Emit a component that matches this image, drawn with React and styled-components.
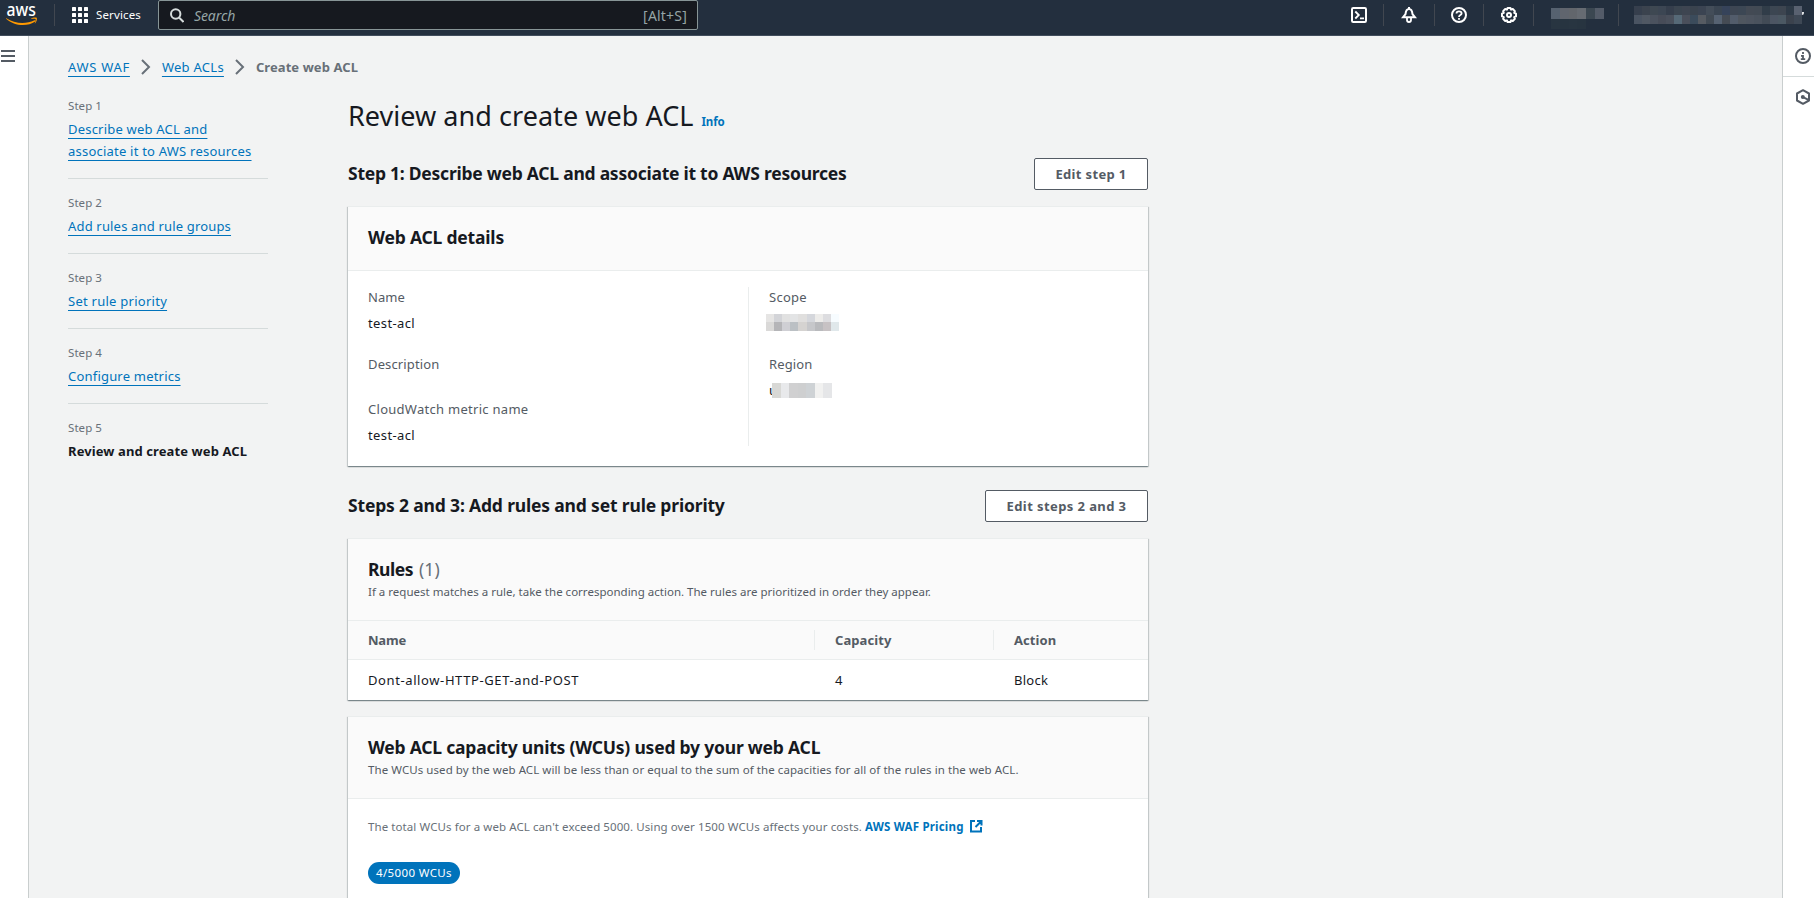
import React from "react";
import styled, { createGlobalStyle, css } from "styled-components";

const GlobalStyle = createGlobalStyle`
  * { box-sizing: border-box; }
  html, body { margin: 0; padding: 0; height: 100%; overflow: hidden; }
  body {
    background: #f2f3f3;
    color: #16191f;
    font-family: "Noto Sans", "Open Sans", sans-serif;
    font-size: 13px;
    line-height: 22px;
  }
  h1, h2, h3, p, ol, ul, dl, dd { margin: 0; padding: 0; }
  ol, ul { list-style: none; }
`;

const tracking = css`
  letter-spacing: ${(p) => p.$ls || 0}px;
  white-space: nowrap;
`;

const Page = styled.div`
  display: flex;
  flex-direction: column;
  height: 898px;
  overflow: hidden;
`;

/* ---------- top navigation ---------- */

const TopBar = styled.header`
  display: flex;
  flex: none;
  height: 36px;
  background: #232f3e;
  border-bottom: 1px solid #414d5c;
  color: #fff;
`;

const LogoLink = styled.a`
  display: block;
  width: 54px;
  height: 30px;
`;

const NavDivider = styled.span`
  flex: none;
  width: 1px;
  height: 22px;
  margin-top: 4px;
  background: #414750;
`;

const ServicesButton = styled.div`
  display: flex;
  align-items: center;
  gap: 8px;
  width: 103px;
  height: 30px;
  padding-left: 17px;
`;

const NavText = styled.span`
  font-size: 11.5px;
  ${tracking}
`;

const SearchBox = styled.div`
  display: flex;
  align-items: center;
  width: 540px;
  height: 30px;
  padding: 0 10px 0 11px;
  background: #16191f;
  border: 1px solid #879596;
  border-radius: 2px;
  color: #95a5a6;
  font-size: 14px;
`;

const Placeholder = styled.span`
  flex: 1;
  margin-left: 10px;
  padding-top: 2px;
  font-style: italic;
  ${tracking}
`;

const Shortcut = styled.span`
  padding-top: 2px;
  ${tracking}
`;

const NavTools = styled.div`
  display: flex;
  margin-left: auto;
  height: 30px;
`;

const ToolSlot = styled.span`
  display: flex;
  align-items: center;
  width: ${(p) => p.$w}px;
  height: 30px;
  padding-left: ${(p) => p.$pl}px;
`;

const AccountSlot = styled.span`
  display: flex;
  align-items: flex-start;
  width: ${(p) => p.$w}px;
  padding: ${(p) => p.$pt}px 0 0 ${(p) => p.$pl}px;
`;

const CaretRemnant = styled.span`
  width: 2px;
  height: 3px;
  margin-top: 6px;
  background: #dfe2e5;
  border-radius: 0 0 2px 0;
`;

/* ---------- redaction blocks ---------- */

const MosaicGrid = styled.span`
  position: relative;
  display: flex;
  flex-direction: column;
`;
const MosaicRow = styled.span`
  display: flex;
  height: ${(p) => p.$h}px;
`;
const MosaicCell = styled.span`
  width: ${(p) => p.$w}px;
  background: ${(p) => p.$c};
`;

function Mosaic({ rows }) {
  return (
    <MosaicGrid>
      {rows.map((row, i) => (
        <MosaicRow key={i} $h={row.h}>
          {row.cells.split(" ").map((c, j) => (
            <MosaicCell key={j} $w={row.w} $c={"#" + c} />
          ))}
        </MosaicRow>
      ))}
    </MosaicGrid>
  );
}

const regionMosaic = [
  { h: 11, w: 8.83, cells: "566270 60656e 62666c 666b72 3b4751 535b68" },
  { h: 10, w: 8.83, cells: "283541 273440 283541 273440" },
];
const accountMosaic = [
  {
    h: 9,
    w: 8,
    cells:
      "363f4d 3b434e 3e4852 3c4653 353e4c 3b4550 3e4551 3a434e 3b4452 434d59 3a4552 36435a 3d4653 3c4754 434a54 424a54 313d49 3c4652 3d4550 2e3a47 596170",
  },
  {
    h: 9,
    w: 8,
    cells:
      "4a5462 505863 4b525e 474c58 4a505c 566977 4a4f5b 3b4b5b 565b62 414a54 566272 454b54 525c6b 4f565f 4d545f 4a525d 424b56 4c5563 4b5863 3b424d 3e4855",
  },
];
const scopeMosaic = [
  { h: 8, w: 8.11, cells: "e6e5e4 d3d4d8 e1e1e1 e3e4e5 e0dfde d5d7dc edecea dddde0 f7fcff" },
  { h: 9, w: 8.11, cells: "dad9d8 b5b5b8 cfcfd4 bbc0c4 d5d3d1 c6c7ca b9babd c7c2c4 e0e8eb" },
];
const regionValueMosaic = [
  { h: 15, w: 8.57, cells: "d8d8d5 e8e9eb d0d0d1 cecfd0 ced2d5 f1f1f0 e5e6e8" },
];

/* ---------- shell ---------- */

const Shell = styled.div`
  display: flex;
  flex: 1;
  min-height: 0;
`;

const LeftRail = styled.nav`
  flex: none;
  width: 29px;
  padding: 14px 0 0 1px;
  background: #fff;
  border-right: 1px solid #c9cece;
`;

const MenuLines = styled.span`
  display: flex;
  flex-direction: column;
  gap: 3px;
  width: 14px;
`;
const MenuLine = styled.span`
  height: 2px;
  background: #545b64;
`;

const RightRail = styled.aside`
  flex: none;
  width: 32px;
  background: #fff;
  border-left: 1px solid #c9cece;
`;
const RailItem = styled.div`
  display: flex;
  align-items: center;
  height: ${(p) => (p.$line ? 41 : 40)}px;
  padding-left: 12px;
  border-bottom: ${(p) => (p.$line ? "1px solid #d5dbdb" : "none")};
`;

const Content = styled.main`
  flex: 1;
  min-width: 0;
  padding: 20px 0 0 39px;
  overflow: hidden;
`;

/* ---------- breadcrumbs and steps ---------- */

const Breadcrumbs = styled.nav`
  display: flex;
  align-items: center;
  height: 22px;
`;
const Link = styled.a`
  color: #0073bb;
  text-decoration: underline 1px;
  text-decoration-skip-ink: none;
  text-underline-offset: 4px;
  ${tracking}
`;
const CrumbCurrent = styled.span`
  color: #687078;
  font-weight: 700;
  ${tracking}
`;
const ChevronBox = styled.span`
  display: flex;
  width: ${(p) => p.$w}px;
  padding-left: ${(p) => p.$pl}px;
`;

const Columns = styled.div`
  display: flex;
  padding-top: 4px;
`;
const StepList = styled.ol`
  flex: none;
  width: 200px;
  margin-right: 80px;
`;
const StepItem = styled.li`
  padding: 15px 0 16px;
  border-bottom: 1px solid #d5dbdb;
  &:last-child {
    border-bottom: none;
  }
`;
const StepLabel = styled.div`
  height: 16px;
  margin-bottom: 5px;
  color: #687078;
  font-size: 11.5px;
  line-height: 18px;
  ${tracking}
`;
const StepLine = styled.div`
  height: 22px;
`;
const StepCurrent = styled.span`
  font-weight: 700;
  ${tracking}
`;

/* ---------- main column ---------- */

const MainColumn = styled.div`
  width: 800px;
  padding-top: 15px;
`;
const Title = styled.h1`
  height: 36px;
  font-size: 27px;
  font-weight: 400;
  line-height: 38px;
  ${tracking}
`;
const InfoLink = styled.a`
  margin-left: 8px;
  color: #0073bb;
  font-size: 11.5px;
  font-weight: 700;
  ${tracking}
`;
const SectionHeader = styled.div`
  display: flex;
  align-items: flex-start;
  justify-content: space-between;
  margin-top: ${(p) => p.$mt}px;
  height: 32px;
`;
const SectionTitle = styled.h2`
  padding-top: 4px;
  font-size: 17.5px;
  line-height: 22px;
  ${tracking}
`;
const Button = styled.button`
  width: ${(p) => p.$w}px;
  height: 32px;
  padding: 0;
  background: #fff;
  border: 1px solid #545b64;
  border-radius: 2px;
  color: #545b64;
  font: 700 13px/22px "Noto Sans", "Open Sans", sans-serif;
  ${tracking}
`;
const Card = styled.section`
  margin-top: 16px;
  background: #fff;
  border-top: 1px solid #eaeded;
  box-shadow: 0 1px 1px 0 rgba(0, 28, 36, 0.3), 1px 1px 1px 0 rgba(0, 28, 36, 0.15),
    -1px 1px 1px 0 rgba(0, 28, 36, 0.15);
`;
const CardHeader = styled.div`
  padding: 19px 20px ${(p) => p.$pb}px;
  background: #fafafa;
  border-bottom: 1px solid #eaeded;
`;
const CardTitle = styled.h3`
  font-size: 17.5px;
  line-height: 22px;
  ${tracking}
`;
const Counter = styled.span`
  margin-left: 6px;
  color: #687078;
  font-weight: 400;
  letter-spacing: 0.1px;
`;
const CardDescription = styled.p`
  height: 18px;
  margin-top: 2px;
  color: #545b64;
  font-size: 11.5px;
  line-height: 20px;
  ${tracking}
`;
const DetailColumns = styled.div`
  display: grid;
  grid-template-columns: 380px 380px;
  padding: 16px 20px 20px;
`;
const DetailColumn = styled.dl`
  display: flex;
  flex-direction: column;
  gap: 20px;
  padding-left: ${(p) => (p.$divided ? 20 : 0)}px;
  border-left: ${(p) => (p.$divided ? "1px solid #eaeded" : "none")};
`;
const DetailLabel = styled.dt`
  margin-bottom: 5px;
  color: #545b64;
  line-height: 20px;
  ${tracking}
`;
const DetailValue = styled.dd`
  height: 22px;
  ${tracking}
`;
const RedactedValue = styled.dd`
  display: flex;
  height: 22px;
  padding-top: ${(p) => p.$pt}px;
  margin-left: ${(p) => p.$ml}px;
`;
const LeadingLetter = styled.span`
  flex: none;
  width: 3px;
  height: 22px;
  margin-top: -4px;
`;

const TableRow = styled.div`
  display: grid;
  grid-template-columns: 467px 179px 154px;
  padding: 9px 0;
  background: ${(p) => (p.$head ? "#fafafa" : "#fff")};
  border-bottom: ${(p) => (p.$head ? "1px solid #eaeded" : "none")};
`;
const HeadCell = styled.span`
  height: 20px;
  padding-left: 20px;
  border-right: 1px solid #eaeded;
  color: #545b64;
  font-weight: 700;
  line-height: 20px;
  ${tracking}
  &:last-child {
    border-right: none;
  }
`;
const Cell = styled.span`
  height: 22px;
  padding-left: 20px;
  ${tracking}
`;

const CapacityBody = styled.div`
  padding: 18px 20px 30px;
`;
const CapacityText = styled.p`
  display: flex;
  height: 18px;
  color: #687078;
  font-size: 11.5px;
  line-height: 20px;
  ${tracking}
`;
const PricingLink = styled.a`
  display: flex;
  margin-left: 3px;
  color: #0073bb;
  font-weight: 700;
  ${tracking}
  svg {
    margin: 2px 0 0 5px;
  }
`;
const Badge = styled.span`
  display: inline-block;
  height: 22px;
  margin-top: 27px;
  padding: 0 8px;
  background: #0073bb;
  border-radius: 11px;
  color: #fff;
  font-size: 11.5px;
  line-height: 21px;
  ${tracking}
`;

/* ---------- icons ---------- */

const AwsLogo = () => (
  <svg width="54" height="30" viewBox="0 0 54 30" display="block">
    <text x="6.6" y="15.8" fill="#fff" fontFamily="Noto Sans, sans-serif" fontSize="18" fontWeight="500" textLength="29.4" lengthAdjust="spacingAndGlyphs">aws</text>
    <path d="M6.3 18.2c8.3 5.6 19.400 6.400 28.200 2.100.9-.4 1.500.500.7 1.100C27.500 26.800 14.300 26.300 6.100 18.700c-.3-.4-.1-.7.2-.5z" fill="#f90" />
    <path d="M31.200 18.500c1.600-1.200 4.700-1.300 5.500-.7.6.7.1 3.900-1.500 5.500-.3.200-.6.100-.4-.2.500-1.200 1.100-3.200.9-3.900-.6-.6-2.800-.4-4.200-.3-.4 0-.5-.2-.3-.4z" fill="#f90" />
  </svg>
);
const GridIcon = () => (
  <svg width="16" height="16" viewBox="0 0 16 16" fill="#fff">
    {[0, 6, 12].map((y) => [0, 6, 12].map((x) => <rect key={x + "-" + y} x={x} y={y} width="4" height="4" rx=".6" />))}
  </svg>
);
const SearchIcon = () => (
  <svg width="14" height="15" viewBox="0 0 14 15" fill="none" stroke="#d5dbdb" strokeWidth="2">
    <circle cx="5.700" cy="6" r="4.700" />
    <path d="M9 9.500l4.500 4.500" />
  </svg>
);
const TerminalIcon = () => (
  <svg width="16" height="16" viewBox="0 0 16 16" fill="none" stroke="#fff" strokeWidth="2">
    <rect x="1" y="1" width="14" height="14" rx="1.200" />
    <path d="M4.300 4.500L7.800 8l-3.500 3.500M9 11.300h4" strokeWidth="1.800" />
  </svg>
);
const BellIcon = () => (
  <svg width="16" height="16" viewBox="0 0 16 16" fill="none" stroke="#fff" strokeWidth="2">
    <path d="M2 10.300h12L11.500 7.200C11.200 3.600 10 1.900 8 1.900S4.800 3.600 4.500 7.200L2 10.300z" strokeLinejoin="miter" />
    <path d="M8 0v2" />
    <path d="M6 11v2c0 1.200.8 2 2 2s2-.8 2-2v-2" strokeWidth="1.800" />
  </svg>
);
const HelpIcon = () => (
  <svg width="16" height="16" viewBox="0 0 16 16" fill="none" stroke="#fff" strokeWidth="2">
    <circle cx="8" cy="8" r="7" />
    <path d="M5.500 6.500C5.500 5 6.500 4.300 8 4.300s2.600.8 2.600 2.100C10.600 8 8 8 8 9.900M8 11v1.700" strokeWidth="1.800" />
  </svg>
);
const GearIcon = () => (
  <svg width="16" height="16" viewBox="0 0 16 16" fill="none" stroke="#fff" strokeWidth="2" strokeLinejoin="round">
    <path d="M6.600 1h2.800l.7 1.600 1.700-.6 2.100 2.100-.7 1.700 1.800.8v2.800l-1.800.8.7 1.700-2.100 2.100-1.700-.7-.7 1.700H6.600l-.7-1.700-1.700.7-2.100-2.100.7-1.700L1 9.400V6.600l1.800-.8-.7-1.700L4.200 2l1.700.6z" />
    <circle cx="8" cy="8" r="2" />
  </svg>
);
const InfoIcon = () => (
  <svg width="16" height="16" viewBox="0 0 16 16" fill="none" stroke="#545b64" strokeWidth="2">
    <circle cx="8" cy="8" r="7" />
    <path d="M8 4v2M6 7.900h2v4M5.800 11.200h4.400" strokeWidth="1.800" />
  </svg>
);
const HexIcon = () => (
  <svg width="16" height="16" viewBox="0 0 16 16" fill="none" stroke="#545b64" strokeWidth="2">
    <path d="M8 1.200l6 3.300v7L8 14.800l-6-3.300v-7z" strokeLinejoin="round" />
    <circle cx="7.800" cy="8" r="2" fill="#545b64" stroke="none" />
    <path d="M8 8.200l5.500 2.600" />
  </svg>
);
const Chevron = () => (
  <svg width="10" height="16" viewBox="0 0 10 16" fill="none" stroke="#687078" strokeWidth="2">
    <path d="M1 1l7 7-7 7" />
  </svg>
);
const ExternalIcon = () => (
  <svg width="14" height="14" viewBox="0 0 14 14" fill="none" stroke="#0073bb" strokeWidth="2">
    <path d="M6 2H2v10.500h10V8M8 2h4.500v4.500M12.300 2.200L6.500 8" />
  </svg>
);

/* ---------- page ---------- */

const steps = [
  { label: "Step 1", lines: [["Describe web ACL and", 0.2], ["associate it to AWS resources", 0.22]] },
  { label: "Step 2", lines: [["Add rules and rule groups", 0.17]] },
  { label: "Step 3", lines: [["Set rule priority", 0.26]] },
  { label: "Step 4", lines: [["Configure metrics", 0.2]] },
  { label: "Step 5", current: true, lines: [["Review and create web ACL", 0.1]] },
];

export default function App() {
  return (
    <Page>
      <GlobalStyle />
      <TopBar>
        <LogoLink><AwsLogo /></LogoLink>
        <NavDivider />
        <ServicesButton>
          <GridIcon />
          <NavText $ls={0.14}>Services</NavText>
        </ServicesButton>
        <SearchBox>
          <SearchIcon />
          <Placeholder $ls={-0.1}>Search</Placeholder>
          <Shortcut $ls={0.2}>[Alt+S]</Shortcut>
        </SearchBox>
        <NavTools>
          <ToolSlot $w={32} $pl={0}><TerminalIcon /></ToolSlot>
          <NavDivider />
          <ToolSlot $w={50} $pl={17}><BellIcon /></ToolSlot>
          <NavDivider />
          <ToolSlot $w={48} $pl={16}><HelpIcon /></ToolSlot>
          <NavDivider />
          <ToolSlot $w={49} $pl={17}><GearIcon /></ToolSlot>
          <NavDivider />
          <AccountSlot $w={84} $pl={17} $pt={8}><Mosaic rows={regionMosaic} /></AccountSlot>
          <NavDivider />
          <AccountSlot $w={195} $pl={15} $pt={6}>
            <Mosaic rows={accountMosaic} />
            <CaretRemnant />
          </AccountSlot>
        </NavTools>
      </TopBar>

      <Shell>
        <LeftRail>
          <MenuLines><MenuLine /><MenuLine /><MenuLine /></MenuLines>
        </LeftRail>

        <Content>
          <Breadcrumbs>
            <Link $ls={0.7}>AWS WAF</Link>
            <ChevronBox $w={32} $pl={11}><Chevron /></ChevronBox>
            <Link $ls={0.27}>Web ACLs</Link>
            <ChevronBox $w={32} $pl={11}><Chevron /></ChevronBox>
            <CrumbCurrent $ls={0.07}>Create web ACL</CrumbCurrent>
          </Breadcrumbs>

          <Columns>
            <StepList>
              {steps.map((s) => (
                <StepItem key={s.label}>
                  <StepLabel $ls={0.07}>{s.label}</StepLabel>
                  {s.lines.map(([text, ls]) => (
                    <StepLine key={text}>
                      {s.current ? <StepCurrent $ls={ls}>{text}</StepCurrent> : <Link $ls={ls}>{text}</Link>}
                    </StepLine>
                  ))}
                </StepItem>
              ))}
            </StepList>

            <MainColumn>
              <Title $ls={0.04}>
                Review and create web ACL
                <InfoLink $ls={-0.15}>Info</InfoLink>
              </Title>

              <SectionHeader $mt={25}>
                <SectionTitle $ls={-0.247}>Step 1: Describe web ACL and associate it to AWS resources</SectionTitle>
                <Button $w={114} $ls={0.34}>Edit step 1</Button>
              </SectionHeader>
              <Card>
                <CardHeader $pb={22}>
                  <CardTitle $ls={-0.185}>Web ACL details</CardTitle>
                </CardHeader>
                <DetailColumns>
                  <DetailColumn>
                    <div>
                      <DetailLabel $ls={0.08}>Name</DetailLabel>
                      <DetailValue $ls={0.38}>test-acl</DetailValue>
                    </div>
                    <div>
                      <DetailLabel $ls={0.14}>Description</DetailLabel>
                    </div>
                    <div>
                      <DetailLabel $ls={0.28}>CloudWatch metric name</DetailLabel>
                      <DetailValue $ls={0.38}>test-acl</DetailValue>
                    </div>
                  </DetailColumn>
                  <DetailColumn $divided>
                    <div>
                      <DetailLabel $ls={0.28}>Scope</DetailLabel>
                      <RedactedValue $pt={2} $ml={-3}><Mosaic rows={scopeMosaic} /></RedactedValue>
                    </div>
                    <div>
                      <DetailLabel $ls={0.14}>Region</DetailLabel>
                      <RedactedValue $pt={4} $ml={0}>
                        <LeadingLetter>u</LeadingLetter>
                        <Mosaic rows={regionValueMosaic} />
                      </RedactedValue>
                    </div>
                  </DetailColumn>
                </DetailColumns>
              </Card>

              <SectionHeader $mt={24}>
                <SectionTitle $ls={-0.17}>Steps 2 and 3: Add rules and set rule priority</SectionTitle>
                <Button $w={163} $ls={0.41}>Edit steps 2 and 3</Button>
              </SectionHeader>
              <Card>
                <CardHeader $pb={20}>
                  <CardTitle $ls={-0.46}>
                    Rules<Counter>(1)</Counter>
                  </CardTitle>
                  <CardDescription $ls={0.007}>
                    If a request matches a rule, take the corresponding action. The rules are prioritized in order they appear.
                  </CardDescription>
                </CardHeader>
                <TableRow $head>
                  <HeadCell $ls={-0.2}>Name</HeadCell>
                  <HeadCell $ls={0.09}>Capacity</HeadCell>
                  <HeadCell $ls={0.06}>Action</HeadCell>
                </TableRow>
                <TableRow>
                  <Cell $ls={0.6}>Dont-allow-HTTP-GET-and-POST</Cell>
                  <Cell>4</Cell>
                  <Cell $ls={0.25}>Block</Cell>
                </TableRow>
              </Card>

              <Card>
                <CardHeader $pb={20}>
                  <CardTitle $ls={-0.21}>Web ACL capacity units (WCUs) used by your web ACL</CardTitle>
                  <CardDescription $ls={0.07}>
                    The WCUs used by the web ACL will be less than or equal to the sum of the capacities for all of the rules in the web ACL.
                  </CardDescription>
                </CardHeader>
                <CapacityBody>
                  <CapacityText $ls={0.084}>
                    The total WCUs for a web ACL can't exceed 5000. Using over 1500 WCUs affects your costs.
                    <PricingLink $ls={0.2}>
                      AWS WAF Pricing
                      <ExternalIcon />
                    </PricingLink>
                  </CapacityText>
                  <Badge $ls={0.37}>4/5000 WCUs</Badge>
                </CapacityBody>
              </Card>
            </MainColumn>
          </Columns>
        </Content>

        <RightRail>
          <RailItem $line><InfoIcon /></RailItem>
          <RailItem><HexIcon /></RailItem>
        </RightRail>
      </Shell>
    </Page>
  );
}
